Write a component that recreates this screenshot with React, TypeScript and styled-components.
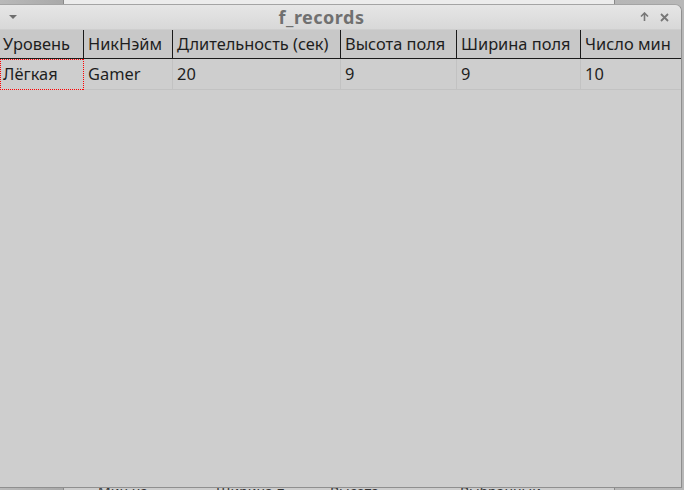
import React from "react";
import styled, { createGlobalStyle } from "styled-components";

const Global = createGlobalStyle`
  html, body { margin: 0; padding: 0; }
  body {
    width: 684px; height: 490px; overflow: hidden;
    background: #9c9c9c;
    font-family: "Noto Sans", "Open Sans", sans-serif;
  }
`;

const Desktop = styled.div`
  position: relative;
  width: 684px;
  height: 490px;
  overflow: hidden;
  background: linear-gradient(90deg, #b9b9b9 0%, #a8a8a8 10%, #b8b8b8 100%);
`;

const BackWindow = styled.div`
  position: absolute;
  left: 63px;
  top: -20px;
  width: 552px;
  height: 540px;
  display: flex;
  flex-direction: column;
  background: #d8d8d8;
  border-left: 1px solid #8a8a8a;
  border-right: 1px solid #8a8a8a;
  box-sizing: border-box;
`;

const BackTopStrip = styled.div`
  height: 24px;
  flex: none;
  background: #ececec;
`;

const BackBody = styled.div`
  flex: 1;
`;

const BackLabels = styled.div`
  flex: none;
  height: 40px;
  display: flex;
  padding: 2px 0 0 34px;
  font-size: 14px;
  color: #333;
  background: #cdcdcd;
  box-sizing: border-box;
`;

const BackLabel = styled.span<{ $w: number }>`
  width: ${(p) => p.$w}px;
  flex: none;
  white-space: nowrap;
`;

const Window = styled.div`
  position: absolute;
  left: 0;
  top: 4px;
  width: 682px;
  height: 484px;
  display: flex;
  flex-direction: column;
  background: #cecece;
  border-right: 1px solid #8f8f8f;
  border-bottom: 1px solid #8f8f8f;
  border-top: 1px solid #a4a4a4;
  border-top-right-radius: 7px;
  box-sizing: border-box;
  overflow: hidden;
`;

const TitleBar = styled.div`
  height: 24px;
  flex: none;
  display: grid;
  grid-template-columns: 24px 1fr 62px;
  align-items: center;
  background: linear-gradient(#e6e6e6, #d8d8d8);
`;

const MenuArrow = styled.div`
  justify-self: start;
  width: 0;
  height: 0;
  margin-left: 9px;
  margin-top: -1px;
  border-left: 4px solid transparent;
  border-right: 4px solid transparent;
  border-top: 4px solid #6e6e6e;
`;

const Title = styled.div`
  text-align: center;
  font-weight: bold;
  font-size: 18px;
  line-height: 22px;
  margin-top: -1px;
  color: #707070;
  letter-spacing: 0.5px;
`;

const TitleButtons = styled.div`
  justify-self: end;
  margin-right: 12px;
  display: flex;
  gap: 11px;
  align-items: center;
`;

const Grid = styled.div`
  display: grid;
  grid-template-columns: 84px 89px 168px 116px 124px 101px;
`;

const HeadCell = styled.div<{ $last?: boolean }>`
  height: 29px;
  margin-top: 1px;
  background: #c8c8c8;
  border-right: ${(p) => (p.$last ? "none" : "1px solid #1a1a1a")};
  border-bottom: 1px solid #1a1a1a;
  box-sizing: border-box;
  padding: 3px 0 0 4px;
  font-size: 16.4px;
  line-height: 22px;
  color: #1e1e1e;
  white-space: nowrap;
  overflow: hidden;
  &:first-child { padding-left: 3px; }
`;

const dotsH = "repeating-linear-gradient(90deg, #ff0000 0 1px, transparent 1px 2px)";
const dotsV = "repeating-linear-gradient(180deg, #ff0000 0 1px, transparent 1px 2px)";

const Cell = styled.div<{ $focus?: boolean; $last?: boolean }>`
  height: 31px;
  box-sizing: border-box;
  border-right: ${(p) => (p.$last ? "none" : "1px solid #c2c2c2")};
  border-bottom: 1px solid #c2c2c2;
  padding: 4px 0 0 4px;
  font-size: 16.4px;
  line-height: 22px;
  color: #1e1e1e;
  white-space: nowrap;
  ${(p) =>
    p.$focus
      ? `
    border-color: transparent;
    padding-left: 3px;
    background:
      ${dotsH} top left / 100% 1px no-repeat,
      ${dotsH} bottom left / 100% 1px no-repeat,
      ${dotsV} top left / 1px 100% no-repeat,
      ${dotsV} top right / 1px 100% no-repeat;
    background-origin: border-box;
    background-clip: border-box;
  `
      : ""}
`;

const headers = ["Уровень", "НикНэйм", "Длительность (сек)", "Высота поля", "Ширина поля", "Число мин"];
const row = ["Лёгкая", "Gamer", "20", "9", "9", "10"];

export default function App() {
  return (
    <>
      <Global />
      <Desktop>
        <BackWindow>
          <BackTopStrip />
          <BackBody />
          <BackLabels>
            <BackLabel $w={118}>Мин на</BackLabel>
            <BackLabel $w={114}>Ширина п</BackLabel>
            <BackLabel $w={130}>Высота</BackLabel>
            <BackLabel $w={120}>Выбранный</BackLabel>
          </BackLabels>
        </BackWindow>
        <Window>
          <TitleBar>
            <MenuArrow />
            <Title>f_records</Title>
            <TitleButtons>
              <svg width="9" height="10" viewBox="0 0 9 10">
                <path d="M4.5 1 L4.5 9 M1 4.5 L4.5 1 L8 4.5" stroke="#777" strokeWidth="1.6" fill="none" />
              </svg>
              <svg width="9" height="9" viewBox="0 0 9 9">
                <path d="M1 1 L8 8 M8 1 L1 8" stroke="#777" strokeWidth="1.8" fill="none" />
              </svg>
            </TitleButtons>
          </TitleBar>
          <Grid>
            {headers.map((h, i) => (
              <HeadCell key={h} $last={i === headers.length - 1}>
                {h}
              </HeadCell>
            ))}
            {row.map((c, i) => (
              <Cell key={i} $focus={i === 0} $last={i === row.length - 1}>
                {c}
              </Cell>
            ))}
          </Grid>
        </Window>
      </Desktop>
    </>
  );
}
